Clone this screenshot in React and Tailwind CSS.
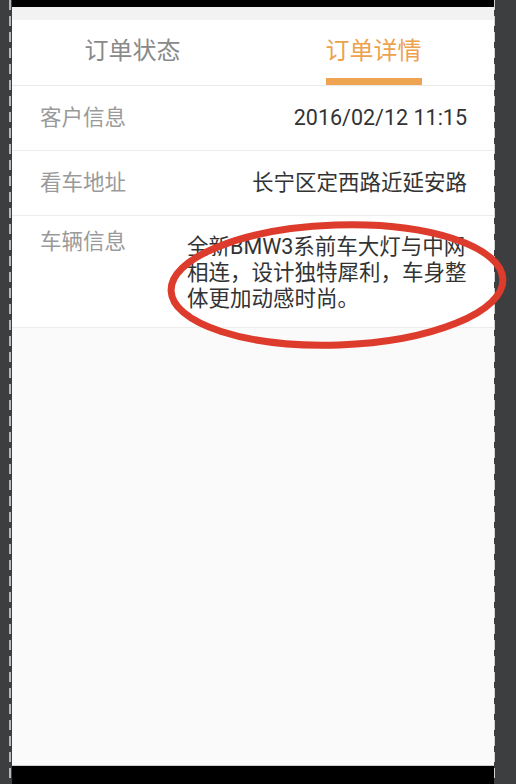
import React from 'react'

const rows = [
  { label: '客户信息', value: '2016/02/12 11:15' },
  { label: '看车地址', value: '长宁区定西路近延安路' },
]

const carInfo = ['全新BMW3系前车大灯与中网', '相连，设计独特犀利，车身整', '体更加动感时尚。']

function Tabs() {
  return (
    <div className="flex h-[66px] bg-white border-b border-[#e9e9e9]">
      <div className="flex-1 flex flex-col items-center">
        <span className="mt-[16px] text-[24px] leading-[30px] text-[#8a8a8a]">订单状态</span>
      </div>
      <div className="flex-1 flex flex-col items-center">
        <span className="mt-[16px] text-[24px] leading-[30px] text-[#eda24e]">订单详情</span>
        <div className="mt-auto w-[96px] h-[7px] bg-[#eea451]" />
      </div>
    </div>
  )
}

function InfoRow({ label, value }) {
  return (
    <div className="flex h-[65px] items-center justify-between pl-[28px] pr-[27px] bg-white border-b border-[#ececec]">
      <span className="text-[21.5px] text-[#9a9a9a]">{label}</span>
      <span className="text-[21.5px] text-[#333]">{value}</span>
    </div>
  )
}

export default function App() {
  return (
    <div className="relative flex w-[516px] h-[784px] overflow-hidden bg-[#3d3e40] font-['Roboto','Noto_Sans_CJK_SC',sans-serif]">
      {/* left frame with dashed guide */}
      <div className="w-[12px] flex justify-end pr-[1px]">
        <div className="w-[2px] h-full bg-[repeating-linear-gradient(to_bottom,#b5b5b5_0,#b5b5b5_10px,transparent_10px,transparent_16px)]" />
      </div>

      <div className="w-[482px] flex flex-col">
        <div className="h-[7px] bg-black" />
        <div className="h-[13px] bg-[#f2f2f2]" />
        <Tabs />
        {rows.map((r) => (
          <InfoRow key={r.label} {...r} />
        ))}
        <div className="flex justify-between pl-[28px] pr-[27px] pb-[15px] bg-white border-b border-[#ececec]">
          <span className="pt-[13px] text-[21.5px] leading-[26px] text-[#9a9a9a]">车辆信息</span>
          <div className="pt-[18px] w-[280px] text-[21.5px] leading-[26px] text-[#333] whitespace-nowrap">
            {carInfo.map((line) => (
              <span key={line} className="block">{line}</span>
            ))}
          </div>
        </div>
        <div className="flex-1 bg-[#fafafa]" />
        <div className="h-[19px] bg-black border-t border-[#cfcfcf]" />
      </div>

      {/* right frame */}
      <div className="w-[22px] flex">
        <div className="w-[1px] h-full bg-[repeating-linear-gradient(to_bottom,#d0d0d0_0,#d0d0d0_10px,transparent_10px,transparent_16px)]" />
      </div>

      {/* red annotation circle */}
      <svg className="absolute left-0 top-0 pointer-events-none" width="516" height="784">
        <ellipse
          cx="337"
          cy="285"
          rx="166"
          ry="60"
          transform="rotate(-2 337 285)"
          fill="none"
          stroke="#dd3b2c"
          strokeWidth="7"
        />
      </svg>
    </div>
  )
}
